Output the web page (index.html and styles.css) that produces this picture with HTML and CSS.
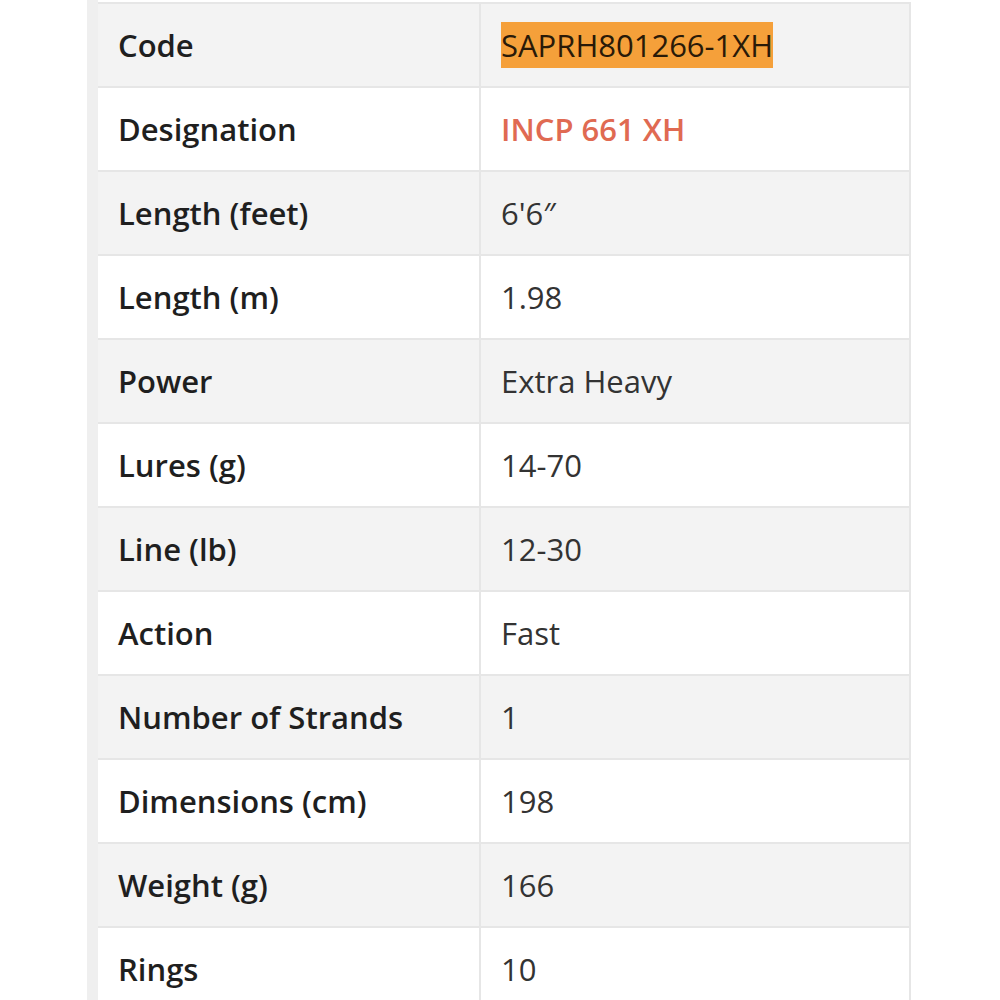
FILE: index.html
```html
<!DOCTYPE html>
<html>
<head>
<meta charset="utf-8">
<link rel="stylesheet" href="styles.css">
</head>
<body>
<div class="page">
  <div class="strip"></div>
  <table class="specs">
    <tbody>
      <tr><th>Code</th><td><span class="hl">SAPRH801266-1XH</span></td></tr>
      <tr><th>Designation</th><td class="accent">INCP 661 XH</td></tr>
      <tr><th>Length (feet)</th><td>6'6″</td></tr>
      <tr><th>Length (m)</th><td>1.98</td></tr>
      <tr><th>Power</th><td>Extra Heavy</td></tr>
      <tr><th>Lures (g)</th><td>14-70</td></tr>
      <tr><th>Line (lb)</th><td>12-30</td></tr>
      <tr><th>Action</th><td>Fast</td></tr>
      <tr><th>Number of Strands</th><td>1</td></tr>
      <tr><th>Dimensions (cm)</th><td>198</td></tr>
      <tr><th>Weight (g)</th><td>166</td></tr>
      <tr><th>Rings</th><td>10</td></tr>
    </tbody>
  </table>
</div>
</body>
</html>
```

FILE: styles.css
```css
html, body {
  margin: 0;
  padding: 0;
  background: #ffffff;
  overflow: hidden;
}
.page {
  display: flex;
  align-items: stretch;
  padding-left: 87px;
  height: 1000px;
}
.strip {
  width: 11px;
  background: #efefef;
  flex: none;
}
.specs {
  width: 813px;
  border-collapse: collapse;
  margin-top: 2px;
  align-self: flex-start;
  font-family: "Open Sans", "Noto Sans", sans-serif;
  font-size: 31px;
  color: #2b2b2b;
}
.specs tr {
  height: 84px;
}
.specs tr:nth-child(odd) {
  background: #f3f3f3;
}
.specs tr:nth-child(even) {
  background: #ffffff;
}
.specs th, .specs td {
  border: 2px solid #e6e6e6;
  padding: 0 20px;
  text-align: left;
  vertical-align: middle;
  line-height: 40px;
}
.specs th {
  width: 341px;
  font-weight: 600;
  color: #1f1f1f;
  border-left: none;
}
.specs td {
  font-weight: 400;
  color: #333333;
}
.specs .accent {
  color: #e06a52;
  font-weight: 600;
}
.hl {
  background: #f5a03a;
  color: #2a1a08;
  padding: 2px 0;
}
```
